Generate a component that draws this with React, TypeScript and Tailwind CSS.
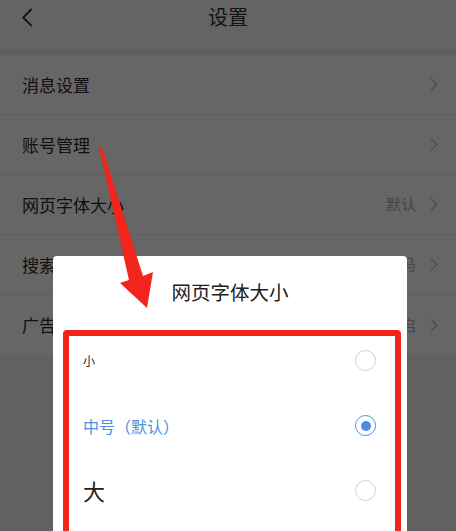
import { useState } from 'react'

// ---- Settings rows ----

interface Row {
  label: string
  value?: string
}

const ROWS: Row[] = [
  { label: '消息设置' },
  { label: '账号管理' },
  { label: '网页字体大小', value: '默认' },
  { label: '搜索引擎', value: '神马' },
  { label: '广告过滤', value: '已开启' },
]

const OPTIONS = [
  { key: 'small', label: '小', size: 'text-[12px]' },
  { key: 'medium', label: '中号（默认）', size: 'text-[16px]' },
  { key: 'large', label: '大', size: 'text-[22px]' },
]

function Chevron({ className }: { className?: string }) {
  return (
    <svg viewBox="0 0 8 14" className={className} fill="none">
      <path d="M1 1l6 6-6 6" stroke="currentColor" strokeWidth="1.3" strokeLinecap="round" strokeLinejoin="round" />
    </svg>
  )
}

export default function App() {
  const [picked, setPicked] = useState('medium')

  return (
    <div
      className="relative h-[531px] w-[456px] overflow-hidden bg-[#f2f2f2]"
      style={{ fontFamily: '"Noto Sans CJK SC", "Noto Sans", sans-serif' }}
    >
      {/* Header (top part cropped off in the screenshot) */}
      <div className="relative h-[50px] bg-[#fafafa] shadow-[0_1px_3px_rgba(0,0,0,0.12)]">
        <div className="flex h-[34px] items-center justify-center">
          <svg viewBox="0 0 12 20" className="absolute left-[21px] top-[8px] h-[19px] w-[12px]" fill="none">
            <path d="M10.5 1.5L2 10l8.5 8.5" stroke="#333" strokeWidth="2" strokeLinecap="round" strokeLinejoin="round" />
          </svg>
          <span className="text-[20px] text-[#333]">设置</span>
        </div>
      </div>

      {/* List */}
      <div className="mt-[5px] bg-white">
        {ROWS.map((row, i) => (
          <div
            key={row.label}
            className={`flex h-[60px] items-center pl-[22px] pr-[18px] ${i < ROWS.length - 1 ? 'border-b border-[#ececec]' : ''}`}
          >
            <span className="flex-1 text-[17px] text-[#2a2a2a]">{row.label}</span>
            {row.value && <span className="mr-[14px] text-[15px] text-[#aaa]">{row.value}</span>}
            <Chevron className="h-[13px] w-[8px] text-[#bbb]" />
          </div>
        ))}
      </div>

      {/* Dim overlay */}
      <div className="absolute inset-0 bg-black/60" />

      {/* Dialog */}
      <div className="absolute left-[53px] top-[256px] w-[354px] rounded-[4px] bg-white pb-[20px]">
        <div className="flex h-[72px] items-center justify-center text-[19.5px] text-[#222]">网页字体大小</div>
        {OPTIONS.map((o) => {
          const on = picked === o.key
          return (
            <button
              key={o.key}
              onClick={() => setPicked(o.key)}
              className="flex h-[65px] w-full items-center pl-[30px] pr-[31px] text-left"
            >
              <span className={`flex-1 ${o.size} ${on ? 'text-[#4a90e2]' : 'text-[#222]'}`}>{o.label}</span>
              <span
                className={`flex h-[21px] w-[21px] items-center justify-center rounded-full border ${on ? 'border-[#4a90e2]' : 'border-[#cfcfcf]'}`}
              >
                {on && <span className="h-[10px] w-[10px] rounded-full bg-[#4a90e2]" />}
              </span>
            </button>
          )
        })}
      </div>

      {/* Red annotation box */}
      <div className="absolute left-[63px] top-[330px] h-[220px] w-[338px] rounded-[4px] border-[6px] border-[#f2251c]" />

      {/* Red annotation arrow */}
      <svg className="absolute inset-0 h-[531px] w-[456px]" viewBox="0 0 456 531">
        <polygon
          points="99,147 102,147 143,276 153,272 147,308 120,283 129,280"
          fill="#f2251c"
        />
      </svg>
    </div>
  )
}
